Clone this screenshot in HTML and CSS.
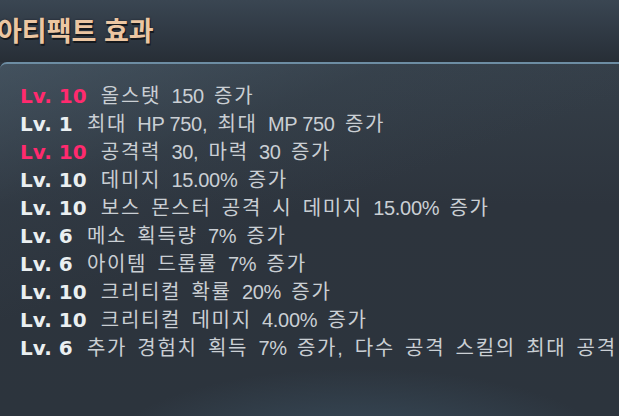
FILE: index.html
```html
<!DOCTYPE html>
<html lang="ko">
<head>
  <meta charset="UTF-8">
  <title>아티팩트 효과</title>
  <link rel="stylesheet" href="styles.css">
</head>
<body>
  <div class="artifact-window">
    <div class="artifact-header">
      <h2 class="artifact-title">아티팩트 효과</h2>
    </div>
    <div class="artifact-panel">
      <ul class="effect-list">
        <li class="effect-row"><span class="effect-lv lv-max">Lv. 10</span> 올스탯 <span class="stat-value">150</span> 증가</li>
        <li class="effect-row"><span class="effect-lv">Lv. 1</span> 최대 <span class="stat-value">HP 750,</span> 최대 <span class="stat-value">MP 750</span> 증가</li>
        <li class="effect-row"><span class="effect-lv lv-max">Lv. 10</span> 공격력 <span class="stat-value">30,</span> 마력 <span class="stat-value">30</span> 증가</li>
        <li class="effect-row"><span class="effect-lv">Lv. 10</span> 데미지 <span class="stat-value">15.00%</span> 증가</li>
        <li class="effect-row"><span class="effect-lv">Lv. 10</span> 보스 몬스터 공격 시 데미지 <span class="stat-value">15.00%</span> 증가</li>
        <li class="effect-row"><span class="effect-lv">Lv. 6</span> 메소 획득량 <span class="stat-value">7%</span> 증가</li>
        <li class="effect-row"><span class="effect-lv">Lv. 6</span> 아이템 드롭률 <span class="stat-value">7%</span> 증가</li>
        <li class="effect-row"><span class="effect-lv">Lv. 10</span> 크리티컬 확률 <span class="stat-value">20%</span> 증가</li>
        <li class="effect-row"><span class="effect-lv">Lv. 10</span> 크리티컬 데미지 <span class="stat-value">4.00%</span> 증가</li>
        <li class="effect-row"><span class="effect-lv">Lv. 6</span> 추가 경험치 획득 <span class="stat-value">7%</span> 증가, 다수 공격 스킬의 최대 공격 대상 수 <span class="stat-value">1</span> 증가</li>
      </ul>
    </div>
  </div>
</body>
</html>
```

FILE: styles.css
```css
/* Artifact effect window */
:root {
  --panel-bg: #2d343d;
  --header-top: #3a4652;
  --header-bottom: #272e36;
  --divider: #6d8da3;
  --text-main: #cacfd4;
  --text-lv: #eaeff1;
  --lv-max: #ff2a6e;
  --title: #ecc6a2;
}

body {
  margin: 0;
  padding: 0;
  width: 619px;
  height: 416px;
  overflow: hidden;
  background-color: var(--panel-bg);
  font-family: "Liberation Sans", "Noto Sans CJK KR", sans-serif;
}

.artifact-window {
  height: 416px;
  display: flex;
  flex-direction: column;
}

.artifact-header {
  height: 62px;
  flex-shrink: 0;
  background:
    linear-gradient(180deg, var(--header-top) 0%, #313b46 45%, var(--header-bottom) 100%);
}

.artifact-title {
  margin: 0;
  padding-top: 12px;
  text-indent: -3px;
  font-family: "Noto Sans CJK KR", sans-serif;
  font-size: 27px;
  font-weight: 700;
  line-height: 36px;
  color: var(--title);
  text-shadow: 1px 2px 0 #15191e, 0 0 2px #1c2128;
}

.artifact-panel {
  flex-grow: 1;
  border-top: 2px solid var(--divider);
  border-top-left-radius: 7px;
  background:
    radial-gradient(ellipse 260px 90px at 58% 112%, rgba(70, 100, 122, 0.55), transparent),
    linear-gradient(160deg, rgba(84, 104, 120, 0.45) 0%, rgba(60, 74, 86, 0.25) 25%, transparent 45%),
    linear-gradient(180deg, #353f49 0%, var(--panel-bg) 40%, #2c343d 100%);
  padding: 18px 0 0 20px;
}

.effect-list {
  list-style: none;
  margin: 0;
  padding: 0;
}

.effect-row {
  font-size: 20px;
  line-height: 28px;
  letter-spacing: 1.7px;
  word-spacing: 3px;
  color: var(--text-main);
  white-space: nowrap;
}

.effect-lv {
  font-family: "DejaVu Sans", sans-serif;
  font-weight: 700;
  letter-spacing: 0;
  word-spacing: 0;
  margin-right: 4px;
  color: var(--text-lv);
}

.effect-lv.lv-max {
  color: var(--lv-max);
}

.stat-value {
  letter-spacing: -0.3px;
  word-spacing: 0;
}
```
